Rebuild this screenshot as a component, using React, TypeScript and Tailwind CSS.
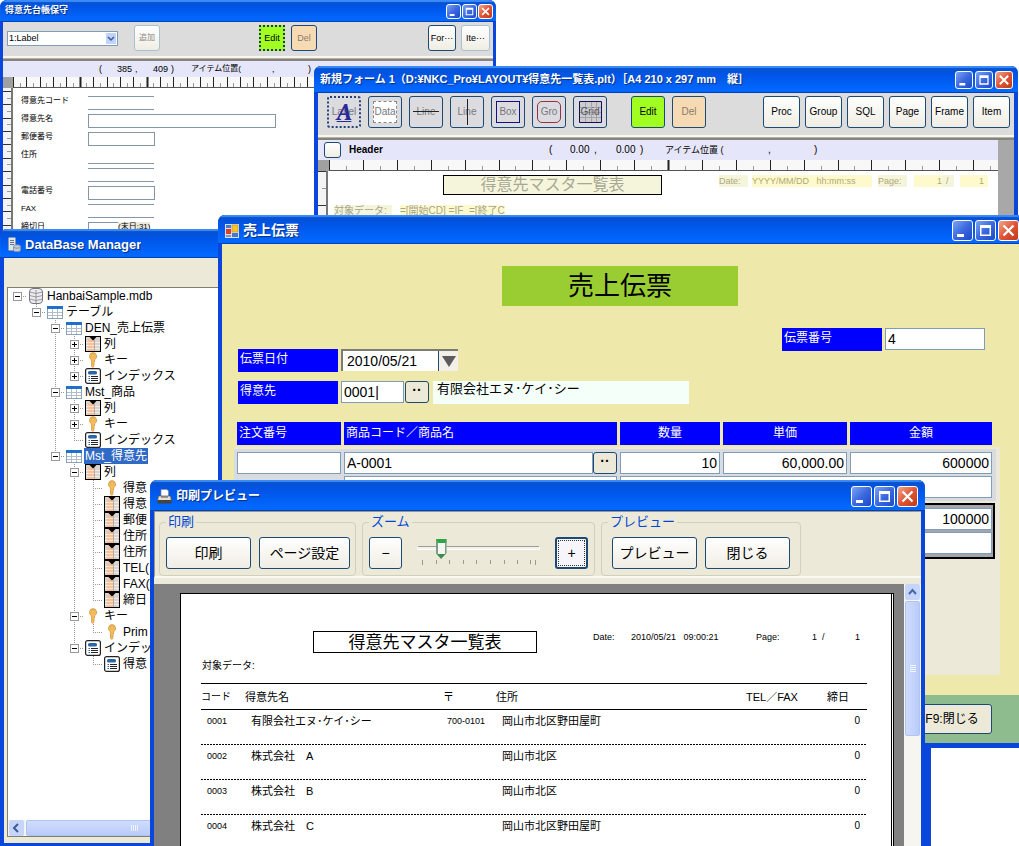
import type { ReactNode } from "react";
import clsx from "clsx";

type Size = "sm" | "md" | "lg";

const captionSize: Record<Size, string> = {
  sm: "h-[15px] w-[15px]",
  md: "h-[18px] w-[18px]",
  lg: "h-[21px] w-[21px]",
};

function CaptionButtons({ size }: { size: Size }) {
  const base = clsx(
    "rounded-[3px] border border-white bg-linear-to-br p-0",
    captionSize[size]
  );
  return (
    <div className={clsx("ml-auto flex shrink-0", size === "sm" ? "gap-px" : "gap-[2px]")}>
      <button aria-label="Minimize" className={clsx(base, "from-[#7ea3f2] via-[#3c69e0] to-[#1c49c8]")}>
        <svg viewBox="0 0 19 19" className="h-full w-full">
          <path d="M4 13h7v3H4z" fill="#fff" />
        </svg>
      </button>
      <button aria-label="Maximize" className={clsx(base, "from-[#7ea3f2] via-[#3c69e0] to-[#1c49c8]")}>
        <svg viewBox="0 0 19 19" className="h-full w-full">
          <path d="M4 4h11v11H4zM5.500 7v6.500h8V7z" fill="#fff" fillRule="evenodd" />
        </svg>
      </button>
      <button aria-label="Close" className={clsx(base, "from-[#f0a58a] via-[#df5434] to-[#c23a1a]")}>
        <svg viewBox="0 0 19 19" className="h-full w-full">
          <path d="M4.500 4.500l10 10M14.500 4.500l-10 10" stroke="#fff" strokeWidth="2.300" />
        </svg>
      </button>
    </div>
  );
}

interface WindowProps {
  title: string;
  titleClass: string;
  barClass: string;
  size?: Size;
  icon?: ReactNode;
  buttons?: boolean;
  className?: string;
  children: ReactNode;
}

function Window({ title, titleClass, barClass, size = "lg", icon, buttons = true, className, children }: WindowProps) {
  return (
    <section className={clsx("absolute flex flex-col overflow-hidden rounded-t-[7px] bg-[#0a46dc]", className)}>
      <header
        className={clsx(
          "flex shrink-0 items-center bg-linear-to-b from-[#0a50c8] from-0% via-[#0054e6] via-30% to-[#0368ff] to-90%",
          "shadow-[inset_0_2px_1px_#3c8cf8,inset_0_-1px_0_#0040b8]",
          barClass
        )}
      >
        {icon}
        <h2 className={clsx("truncate font-bold text-white [text-shadow:1px_1px_1px_#0a2f80]", titleClass)}>{title}</h2>
        {buttons && <CaptionButtons size={size} />}
      </header>
      {children}
    </section>
  );
}

const xpButton =
  "relative flex shrink-0 items-center justify-center rounded-[3px] border border-[#1c4a74] bg-linear-to-b from-white to-[#efede3] whitespace-nowrap";

/* Ticks along the top edge of the layout canvas */
function HRuler({ step, bold, className }: { step: number; bold: number[]; className?: string }) {
  const ticks = Array.from({ length: 110 }, (_, i) => i);
  return (
    <svg className={clsx("block w-full bg-[#f8f8f8]", className)} aria-hidden="true">
      {ticks.map((i) => {
        const x = Math.round(i * step) + 0.5;
        const heavy = bold.includes(i);
        return (
          <line
            key={i}
            x1={x}
            x2={x}
            y1={i % 2 === 0 || heavy ? 0 : 6}
            y2={11}
            stroke={i % 2 === 0 || heavy ? "#222" : "#999"}
            strokeWidth={heavy ? 2 : 1}
          />
        );
      })}
      <line x1="0" x2="2000" y1="10.5" y2="10.5" stroke="#555" />
    </svg>
  );
}

function VRuler({ step, offset, className }: { step: number; offset: number; className?: string }) {
  const ticks = Array.from({ length: 30 }, (_, i) => i);
  return (
    <svg className={clsx("block shrink-0 border-r-2 border-[#777] bg-[#f4f4f4]", className)} aria-hidden="true">
      {ticks.map((i) => {
        const y = Math.round(i * step + offset) + 0.5;
        return <line key={i} x1={i % 2 ? 4 : 0} x2="10" y1={y} y2={y} stroke={i % 2 ? "#999" : "#333"} />;
      })}
    </svg>
  );
}

function Splitter() {
  return <div className="h-[5px] shrink-0 border-t-2 border-b-2 border-t-[#f8f6ee] border-b-[#85837a] bg-[#b4b2a8]" />;
}

const customerFields = [
  { label: "得意先コード", box: "w-[66px] border-y" },
  { label: "得意先名", box: "w-[188px] border" },
  { label: "郵便番号", box: "w-[67px] border" },
  { label: "住所", box: "w-[66px] border-b" },
  { label: "", box: "w-[66px] border-y" },
  { label: "電話番号", box: "w-[67px] border" },
  { label: "FAX", box: "w-[66px] border-y" },
  { label: "締切日", box: "w-[30px] border-l border-t" },
];

function CustomerWindow() {
  return (
    <Window
      title="得意先台帳保守"
      titleClass="text-[9px]"
      barClass="h-[22px] pl-[5px] pr-[3px]"
      size="sm"
      className="top-0 left-0 h-[260px] w-[496px]"
    >
      <div className="mx-[3px] flex min-h-0 flex-1 flex-col bg-white">
        <div className="flex h-[34px] shrink-0 items-start bg-[#dcdcdc] pt-[3px] pr-[3px] pl-1 text-[9px] leading-none">
          <div className="relative mt-[6px]">
            <select
              aria-label="Item"
              className="h-[15px] w-[111px] appearance-none border border-[#7f9db9] bg-white pl-px text-[9px] leading-none"
            >
              <option>1:Label</option>
            </select>
            <svg viewBox="0 0 10 11" className="pointer-events-none absolute top-[2px] right-[2px] h-[11px] w-[10px]">
              <rect width="10" height="11" rx="1" fill="#c1d3fb" />
              <path d="M2 4l3 3 3-3" fill="none" stroke="#3a5a9a" strokeWidth="1.500" />
            </svg>
          </div>
          <button className={clsx(xpButton, "ml-4 h-[26px] w-[26px] border-[#a8c0d0] text-[8px] text-[#888]")}>追加</button>
          <button className="ml-[99px] h-[26px] w-[26px] shrink-0 border-2 border-dotted border-[#1c3a5a] bg-[#a0ff20]">
            Edit
          </button>
          <button className={clsx(xpButton, "ml-[6px] h-[26px] w-[26px] bg-none bg-[#f6dab4] text-[#8a7a6a]")}>Del</button>
          <button className={clsx(xpButton, "ml-auto h-[26px] w-[28px]")}>For···</button>
          <button className={clsx(xpButton, "ml-[5px] h-[26px] w-[29px] border-[#a8c0d0]")}>Ite···</button>
        </div>
        <Splitter />
        <div className="flex h-4 shrink-0 items-center bg-[#e6e6fa] pl-[96px] text-[9px] leading-none">
          <span className="w-[18px]">(</span>
          <span className="w-[18px]">385</span>
          <span className="w-[18px]">,</span>
          <span className="w-[18px]">409</span>
          <span className="w-[20px]">)</span>
          <span className="w-[81px] text-[8px]">アイテム位置(</span>
          <span className="w-[36px]">,</span>
          <span>)</span>
        </div>
        <div className="flex shrink-0">
          <span className="w-[10px] shrink-0 bg-[#a0a0a0]" />
          <HRuler step={6.68} bold={[10, 20]} className="h-[11px]" />
        </div>
        <div className="flex min-h-0 flex-1">
          <VRuler step={6.68} offset={3} className="h-full w-[10px]" />
          <div className="flex flex-col pt-[8px] pl-[8px]">
            {customerFields.map((f, i) => (
              <label key={i} className="flex h-[18px] items-start leading-[10px]">
                <span className="w-[67px] text-[8px]">{f.label}</span>
                <input className={clsx("h-[14px] border-[#8496a8] bg-transparent", f.box)} />
                {i === 7 && <span className="bg-[#ece9dc] text-[8px]">(末日:31)</span>}
              </label>
            ))}
          </div>
        </div>
      </div>
    </Window>
  );
}

const tool = clsx(xpButton, "h-8 w-[34px] bg-none bg-[#dcdce0] text-[10px] text-[#77777d]");

function FormWindow() {
  return (
    <Window
      title="新規フォーム 1（D:¥NKC_Pro¥LAYOUT¥得意先一覧表.plt）［A4 210 x 297 mm　縦］"
      titleClass="text-[11px]"
      barClass="h-[27px] pl-[6px] pr-[5px]"
      size="md"
      className="top-[66px] left-[314px] h-[170px] w-[704px]"
    >
      <div className="mx-1 flex min-h-0 flex-1 flex-col bg-white">
        <div className="flex h-[42px] shrink-0 items-start gap-[7px] bg-[#dcdcdc] pt-[3px] pr-1 pl-[9px] text-[10px] leading-none">
          <button className={clsx(tool, "border-2 border-dotted border-[#26427a]")}>
            Label
            <i className="absolute inset-0 font-serif text-[24px] leading-[28px] font-bold text-[#2a2a96] underline decoration-1">A</i>
          </button>
          <button className={tool}>
            <span className="absolute inset-1 border border-dashed border-[#888] bg-white" />
            <span className="relative">Data</span>
          </button>
          <button className={tool}>
            Line
            <span className="absolute inset-x-[3px] top-[14px] h-px bg-[#222]" />
          </button>
          <button className={tool}>
            Line
            <span className="absolute inset-y-[2px] left-[16px] w-px bg-[#222]" />
          </button>
          <button className={tool}>
            <span className="absolute inset-1 border border-[#10108a]" />
            Box
          </button>
          <button className={tool}>
            <span className="absolute inset-1 rounded-[5px] border border-[#96304a]" />
            Gro
          </button>
          <button className={tool}>
            <svg viewBox="0 0 32 30" className="absolute inset-0">
              <path d="M5.500 4.500h22v21h-22z" fill="#ccccd0" stroke="#10105a" />
              <path d="M11.500 5v20M17.500 5v20M22.500 5v20M6 10.500h21M6 15.500h21M6 20.500h21" stroke="#a4a4a8" fill="none" />
            </svg>
            <span className="relative text-[#55555c]">Grid</span>
          </button>
          <button className={clsx(xpButton, "ml-[17px] h-8 w-[34px] bg-none bg-[#a0ff20]")}>Edit</button>
          <button className={clsx(xpButton, "h-8 w-[34px] bg-none bg-[#f6dab4] text-[#8a7a6a]")}>Del</button>
          <div className="ml-auto flex gap-[5px]">
            {["Proc", "Group", "SQL", "Page", "Frame", "Item"].map((name) => (
              <button key={name} className={clsx(xpButton, "h-8 w-[37px]")}>
                {name}
              </button>
            ))}
          </div>
        </div>
        <Splitter />
        <div className="flex min-h-0 flex-1">
          <div className="flex min-w-0 flex-1 flex-col">
            <div className="flex h-5 shrink-0 items-center bg-[#e6e6fa] pl-[6px] text-[10px] leading-none">
              <button aria-label="Header section" className={clsx(xpButton, "h-4 w-[17px]")} />
              <b className="w-[208px] pl-2">Header</b>
              <span className="w-[21px]">(</span>
              <span className="w-[24px]">0.00</span>
              <span className="w-[22px]">,</span>
              <span className="w-[24px]">0.00</span>
              <span className="w-[25px]">)</span>
              <span className="w-[103px] text-[9px]">アイテム位置 (</span>
              <span className="w-[46px]">,</span>
              <span>)</span>
            </div>
            <div className="flex shrink-0">
              <span className="w-[11px] shrink-0 bg-[#a0a0a0]" />
              <HRuler step={16.95} bold={[20]} className="h-[11px]" />
            </div>
            <div className="flex min-h-0 flex-1">
              <VRuler step={17} offset={0} className="h-full w-[10px]" />
              <div className="flex min-w-0 flex-1 flex-col pt-[4px] pr-[10px] pl-[6px] text-[9px] leading-[12px] text-[#a5a58a]">
                <div className="flex items-start">
                  <div className="ml-[109px] h-5 w-[219px] border border-black bg-[#f5f5dc] text-center text-[16px] leading-[18px] text-[#a8a894]">
                    得意先マスタ一覧表
                  </div>
                  <div className="ml-auto flex text-[#b0a878]">
                    <span className="w-[29px] bg-[#f5f5dc]">Date:</span>
                    <span className="ml-1 w-[120px] bg-[#fffacd] whitespace-pre">YYYY/MM/DD   hh:mm:ss</span>
                    <span className="ml-[6px] w-[29px] bg-[#f5f5dc]">Page:</span>
                    <span className="ml-[7px] w-[28px] bg-[#fffacd] text-right">1</span>
                    <span className="w-3 bg-[#f5f5dc] pl-1">/</span>
                    <span className="ml-[6px] w-[28px] bg-[#fffacd] pr-1 text-right">1</span>
                  </div>
                </div>
                <div className="mt-[10px] flex text-[10px]">
                  <span className="w-[58px] bg-[#f5f5dc]">対象データ:</span>
                  <span className="ml-[8px] bg-[#fffacd] whitespace-pre">=[開始CD] =IF  =[終了C</span>
                </div>
              </div>
            </div>
          </div>
          <div className="w-4 shrink-0 bg-[#a8a8a8]" />
        </div>
      </div>
    </Window>
  );
}

type IconKind = "db" | "table" | "column" | "key" | "index";

function TreeIcon({ kind }: { kind: IconKind }) {
  return (
    <svg viewBox="0 0 16 16" className="ml-px h-4 w-4 shrink-0" aria-hidden="true">
      {kind === "db" && (
        <g fill="#ececf0" stroke="#77777c">
          <rect x="1.500" y="0.500" width="13" height="15" rx="3.500" />
          <path d="M1.500 4q6.500 3 13 0M1.500 7.500q6.500 3 13 0M1.500 11q6.500 3 13 0M8 2v13" fill="none" strokeWidth=".7" />
        </g>
      )}
      {kind === "table" && (
        <g>
          <rect x="0.500" y="2.500" width="15" height="12" fill="#fff" stroke="#8ca0b8" />
          <rect y="2" width="16" height="3" fill="#1d70cc" />
          <path d="M5.500 5v9M10.500 5v9M1 8.500h14M1 11.500h14" stroke="#b4bec8" />
        </g>
      )}
      {kind === "column" && (
        <g>
          <rect x="0.500" y="0.500" width="15" height="15" fill="#d9d4cf" stroke="#000" />
          <rect x="3" y="3" width="6" height="12" fill="#f5c09a" />
          <path d="M1 6.500h14M1 9.500h14M1 12.500h14" stroke="#fff" strokeOpacity=".55" />
          <path d="M9.500 3v12" stroke="#b8aca0" />
          <path d="M4.500 1h7L8 4.500z" fill="#000" />
        </g>
      )}
      {kind === "key" && (
        <g fill="#f8bd58" stroke="#c88c30" strokeWidth=".7">
          <path d="M8 .6a3.800 3.800 0 0 1 1.500 7.200v2.200l-1 1 1 1.200-1 1 .5 1-1.200 1.300-1.200-1.200V7.800A3.800 3.800 0 0 1 8 .6z" />
          <circle cx="8" cy="3.200" r="1.100" fill="#fff" />
        </g>
      )}
      {kind === "index" && (
        <g>
          <rect x="0.600" y="0.600" width="14.800" height="14.800" rx="2" fill="#fff" stroke="#222" strokeWidth="1.200" />
          <rect x="3" y="3" width="9" height="3.500" rx="1.500" fill="#2c64a8" />
          <path d="M6 8.500h7M6 10.500h7M6 12.500h7" stroke="#222" />
          <path d="M3.500 8.500h1.500M3.500 10.500h1.500M3.500 12.500h1.500" stroke="#2c64a8" />
        </g>
      )}
    </svg>
  );
}

/*
 * One guide cell per level:
 * "." blank, "|" line through, "t"/"l" branch and last branch,
 * "+"/"-" expander on a branch, "p"/"m" expander on the last branch, "r" root.
 */
function Guide({ kind }: { kind: string }) {
  const through = "|t+-".includes(kind);
  const upper = "lpm".includes(kind);
  const open = "-mr".includes(kind);
  const art = (
    <svg viewBox="0 0 19 16" className="h-4 w-[19px]">
      {(through || upper) && (
        <path d={through ? "M9.500 0v16" : "M9.500 0v8"} stroke="#999" strokeDasharray="1 1" />
      )}
      {kind !== "." && kind !== "|" && <path d="M9 8.500h10" stroke="#999" strokeDasharray="1 1" />}
      {"+-pmr".includes(kind) && (
        <>
          <rect x="5.500" y="4.500" width="8" height="8" fill="#fff" stroke="#999" />
          <path d={open ? "M7 8.500h5" : "M7 8.500h5M9.500 6v5"} stroke="#000" />
        </>
      )}
    </svg>
  );
  if ("+-pmr".includes(kind)) {
    return (
      <button aria-label={open ? "Collapse" : "Expand"} className="shrink-0">
        {art}
      </button>
    );
  }
  return <span className="shrink-0">{art}</span>;
}

const tree: { guides: string; icon: IconKind; text: string; selected?: boolean }[] = [
  { guides: "r", icon: "db", text: "HanbaiSample.mdb" },
  { guides: ".m", icon: "table", text: "テーブル" },
  { guides: "..-", icon: "table", text: "DEN_売上伝票" },
  { guides: "..|+", icon: "column", text: "列" },
  { guides: "..|+", icon: "key", text: "キー" },
  { guides: "..|p", icon: "index", text: "インデックス" },
  { guides: "..-", icon: "table", text: "Mst_商品" },
  { guides: "..|+", icon: "column", text: "列" },
  { guides: "..|+", icon: "key", text: "キー" },
  { guides: "..|l", icon: "index", text: "インデックス" },
  { guides: "..m", icon: "table", text: "Mst_得意先", selected: true },
  { guides: "...-", icon: "column", text: "列" },
  { guides: "...|t", icon: "key", text: "得意" },
  { guides: "...|t", icon: "column", text: "得意" },
  { guides: "...|t", icon: "column", text: "郵便" },
  { guides: "...|t", icon: "column", text: "住所" },
  { guides: "...|t", icon: "column", text: "住所" },
  { guides: "...|t", icon: "column", text: "TEL(" },
  { guides: "...|t", icon: "column", text: "FAX(" },
  { guides: "...|l", icon: "column", text: "締日" },
  { guides: "...-", icon: "key", text: "キー" },
  { guides: "...|l", icon: "key", text: "Prim" },
  { guides: "...m", icon: "index", text: "インデックス" },
  { guides: "....l", icon: "index", text: "得意" },
];

function DatabaseWindow() {
  return (
    <Window
      title="DataBase Manager"
      titleClass="text-[13px]"
      barClass="h-[29px] pl-2 pt-[2px]"
      buttons={false}
      className="top-[229px] bottom-0 left-0 w-[931px]"
      icon={
        <svg viewBox="0 0 13 15" className="mr-1 h-[15px] w-[13px]">
          <rect x="0.500" y="0.500" width="7" height="13" rx="1" fill="#dce4ec" stroke="#8a9aac" />
          <path d="M2 3.500h4M2 5.500h4M2 7.500h4" stroke="#6a7a90" />
          <rect x="5.500" y="8" width="7" height="6.500" rx="2" fill="#c4ccd8" stroke="#8a9aac" />
          <path d="M5.500 10.500q3.500 1.500 7 0" fill="none" stroke="#8a9aac" />
        </svg>
      }
    >
      <div className="mr-[6px] mb-[3px] ml-1 flex min-h-0 flex-1 flex-col bg-[#ece9d8] pt-[29px] pb-[6px] pl-[3px]">
        <div className="flex min-h-0 flex-1 flex-col border border-[#808070] bg-white">
          <ul className="min-h-0 flex-1 overflow-hidden text-[12px] leading-4">
            {tree.map((node, i) => (
              <li key={i} className="flex h-4 items-center">
                {node.guides.split("").map((g, j) => (
                  <Guide key={j} kind={g} />
                ))}
                <TreeIcon kind={node.icon} />
                <span className={clsx("ml-[2px] px-px whitespace-nowrap", node.selected && "bg-[#316ac5] text-white")}>
                  {node.text}
                </span>
              </li>
            ))}
          </ul>
          <div className="flex h-4 shrink-0 gap-[2px] bg-[#f4f3ee] px-px">
            <button aria-label="Scroll left" className="h-4 w-[15px] rounded-[2px] bg-[#c6d5fc]">
              <svg viewBox="0 0 15 16" className="h-full w-full">
                <path d="M9 4L5 8l4 4" fill="none" stroke="#3f5a94" strokeWidth="2" />
              </svg>
            </button>
            <div className="flex h-4 w-[217px] items-center justify-center rounded-[2px] border border-[#b0c4f4] bg-linear-to-b from-[#cfdcfd] to-[#bacbf8]">
              <svg viewBox="0 0 8 6" className="h-[6px] w-2">
                <path d="M.5 0v6M2.500 0v6M4.500 0v6M6.500 0v6" stroke="#eef4ff" />
              </svg>
            </div>
          </div>
        </div>
      </div>
    </Window>
  );
}

const slipInput = "h-[22px] w-full border border-[#7f9db9] bg-white px-[2px] text-[14px] leading-none";
const slipLabel = "h-[23px] w-[100px] shrink-0 bg-[#0000ff] pl-[2px] text-[12px] leading-[21px] text-white";

function SlipColumns() {
  return (
    <colgroup>
      <col className="w-[107px]" />
      <col className="w-[276px]" />
      <col className="w-[103px]" />
      <col className="w-[127px]" />
      <col className="w-[142px]" />
    </colgroup>
  );
}

function SlipLine({ code, qty, price, amount }: { code: string; qty: string; price: string; amount: string }) {
  return (
    <table className="w-[755px] table-fixed border-collapse">
      <SlipColumns />
      <tbody>
        <tr className="h-6">
          <td className="p-0 pr-[3px] align-top">
            <input aria-label="注文番号" className={clsx(slipInput, "block")} />
          </td>
          <td className="p-0 pr-[3px] align-top">
            <div className="flex">
              <input aria-label="商品コード" className={slipInput} defaultValue={code} />
              <button aria-label="商品検索" className={clsx(xpButton, "h-[22px] w-6 bg-none bg-[#ece9d8] pb-1 text-[14px] leading-none font-bold")}>
                ··
              </button>
            </div>
          </td>
          <td className="p-0 pr-[3px] align-top">
            <input aria-label="数量" className={clsx(slipInput, "block text-right")} defaultValue={qty} />
          </td>
          <td className="p-0 pr-[3px] align-top">
            <input aria-label="単価" className={clsx(slipInput, "block text-right")} defaultValue={price} />
          </td>
          <td className="p-0 align-top">
            <input aria-label="金額" className={clsx(slipInput, "block text-right")} defaultValue={amount} />
          </td>
        </tr>
        <tr>
          <td />
          <td className="p-0 pr-[3px] align-top">
            <input aria-label="商品名" className={clsx(slipInput, "block")} />
          </td>
          <td colSpan={3} className="p-0 align-top">
            <input aria-label="備考" className={clsx(slipInput, "block")} />
          </td>
        </tr>
      </tbody>
    </table>
  );
}

function SlipWindow() {
  return (
    <Window
      title="売上伝票"
      titleClass="text-[14px]"
      barClass="h-[29px] pl-[7px] pr-1 pt-[2px]"
      className="top-[215px] -right-1 left-[218px] h-[533px]"
      icon={
        <svg viewBox="0 0 14 14" className="mr-1 h-[14px] w-[14px]">
          <rect width="14" height="14" fill="#d8e0ec" />
          <rect x="1" y="1" width="5" height="3" fill="#4a78c8" />
          <rect x="7" y="1" width="6" height="7" fill="#f4c430" stroke="#c89010" strokeWidth=".6" />
          <rect x="1" y="5" width="5" height="5" fill="#d8402c" />
          <rect x="1" y="11" width="5" height="2" fill="#8098c0" />
          <rect x="7" y="9" width="6" height="4" fill="#4a78c8" />
        </svg>
      }
    >
      <div className="mx-1 mb-[5px] flex min-h-0 flex-1 flex-col bg-[#eee8aa]">
        <h1 className="mt-[22px] ml-[280px] h-10 w-[236px] bg-[#9acd32] text-center text-[26px] leading-10">売上伝票</h1>
        <div className="mt-[22px] mr-[34px] ml-4 flex items-start">
          <div className="flex flex-col gap-[9px] pt-[21px]">
            <div className="flex items-start gap-[3px]">
              <label htmlFor="slip-date" className={slipLabel}>
                伝票日付
              </label>
              <div className="flex h-[22px] w-[117px] border-t-2 border-l-2 border-[#7c7c74] bg-white">
                <input id="slip-date" className="min-w-0 flex-1 pl-1 text-[14px] leading-none" defaultValue="2010/05/21" />
                <button aria-label="日付選択" className="flex w-5 items-center justify-center border-l border-[#1c4a74] bg-[#f2f0e8]">
                  <svg viewBox="0 0 14 11" className="h-[11px] w-[14px]">
                    <path d="M0 0h14L7 11z" fill="#5c5c5c" />
                  </svg>
                </button>
              </div>
            </div>
            <div className="flex items-start">
              <label htmlFor="slip-customer" className={slipLabel}>
                得意先
              </label>
              <div className="ml-[3px] w-[63px]">
                <input id="slip-customer" className={clsx(slipInput, "block")} defaultValue="0001|" />
              </div>
              <button aria-label="得意先検索" className={clsx(xpButton, "ml-px h-[22px] w-6 bg-none bg-[#ece9d8] pb-1 text-[14px] leading-none font-bold")}>
                ··
              </button>
              <span className="ml-1 h-[23px] w-[256px] bg-[#f5fffa] pl-1 text-[13px] leading-4">有限会社エヌ･ケイ･シー</span>
            </div>
          </div>
          <div className="ml-auto flex items-start gap-[3px]">
            <label htmlFor="slip-no" className={slipLabel}>
              伝票番号
            </label>
            <div className="w-[100px]">
              <input id="slip-no" className={clsx(slipInput, "block")} defaultValue="4" />
            </div>
          </div>
        </div>

        <table className="mt-[18px] ml-[15px] w-[755px] table-fixed border-collapse text-[12px] leading-[23px] text-white">
          <SlipColumns />
          <thead>
            <tr>
              {["注文番号", "商品コード／商品名", "数量", "単価", "金額"].map((name, i) => (
                <th key={name} className={clsx("p-0 font-normal", i < 4 && "pr-[3px]", i < 2 && "text-left")}>
                  <div className="bg-[#0000ff] px-[2px]">{name}</div>
                </th>
              ))}
            </tr>
          </thead>
        </table>

        <div className="mt-[2px] mr-[19px] ml-3 h-[228px] bg-[#ece9d8] pt-[2px] pr-1">
          <div className="bg-[#d8dce0] py-[3px] pl-[3px]">
            <SlipLine code="A-0001" qty="10" price="60,000.00" amount="600000" />
          </div>
          <div className="mt-[2px] mr-px border-2 border-black bg-[#a4a6ac] py-[3px] pl-px">
            <SlipLine code="" qty="" price="" amount="100000" />
          </div>
        </div>
        <div className="mt-auto flex h-12 items-center justify-end bg-[#8fbc8f] pr-[27px]">
          <button className={clsx(xpButton, "h-[30px] w-20 bg-none bg-[#ece9d8] text-[12px]")}>F9:閉じる</button>
        </div>
      </div>
    </Window>
  );
}

const reportRows = [
  { code: "0001", name: "有限会社エヌ･ケイ･シー", zip: "700-0101", address: "岡山市北区野田屋町" },
  { code: "0002", name: "株式会社　A", zip: "", address: "岡山市北区" },
  { code: "0003", name: "株式会社　B", zip: "", address: "岡山市北区" },
  { code: "0004", name: "株式会社　C", zip: "", address: "岡山市北区野田屋町" },
];

function ReportPage() {
  return (
    <div className="ml-[26px] flex min-w-0 flex-1 flex-col border-t border-r-[3px] border-l border-double border-black bg-white pr-6 pl-5 text-[9px] leading-3">
      <div className="mt-[37px] flex items-start">
        <h3 className="ml-[112px] h-[22px] w-[224px] shrink-0 border border-black text-center text-[17px] leading-[22px]">
          得意先マスタ一覧表
        </h3>
        <div className="ml-[56px] flex whitespace-pre">
          <span className="w-[38px]">Date:</span>
          <span className="w-[125px]">2010/05/21   09:00:21</span>
          <span className="w-[56px]">Page:</span>
          <span className="w-[43px]">1  /</span>
          <span>1</span>
        </div>
      </div>
      <p className="h-[30px] pt-[6px] pl-px text-[10px] leading-[14px]">対象データ:</p>
      <table className="w-full table-fixed border-collapse text-[11px] leading-[14px]">
        <colgroup>
          <col className="w-[44px]" />
          <col className="w-[198px]" />
          <col className="w-[53px]" />
          <col />
          <col className="w-[81px]" />
          <col className="w-[40px]" />
        </colgroup>
        <thead>
          <tr className="h-[26px] border-y border-black text-left">
            <th className="p-0 text-[10px] font-normal">コード</th>
            <th className="p-0 font-normal">得意先名</th>
            <th className="p-0 font-normal">〒</th>
            <th className="p-0 font-normal">住所</th>
            <th className="p-0 font-normal">TEL／FAX</th>
            <th className="p-0 font-normal">締日</th>
          </tr>
        </thead>
        <tbody>
          {reportRows.map((row) => (
            <tr
              key={row.code}
              className="h-[35px] bg-[repeating-linear-gradient(to_right,#000_0_2px,transparent_2px_3px)] bg-[length:100%_1px] bg-bottom bg-no-repeat align-top"
            >
              <td className="p-0 pt-1 pl-[6px] text-[9px]">{row.code}</td>
              <td className="p-0 pt-1 pl-[6px]">{row.name}</td>
              <td className="p-0 pt-1 pl-1 text-[9px]">{row.zip}</td>
              <td className="p-0 pt-1 pl-[6px]">{row.address}</td>
              <td className="p-0" />
              <td className="p-0 pt-1 pr-[7px] text-right text-[10px]">0</td>
            </tr>
          ))}
        </tbody>
      </table>
    </div>
  );
}

const group = "h-[61px] rounded-[4px] border border-[#d0d0bf] pt-[8px] pb-[6px]";
const legend = "px-[2px] text-[13px] leading-[14px] text-[#0046d5]";
const previewButton = clsx(xpButton, "h-8 text-[14px]");

function PreviewWindow() {
  return (
    <Window
      title="印刷プレビュー"
      titleClass="text-[12px]"
      barClass="h-[31px] pl-[7px] pr-[7px] pt-px"
      className="top-[480px] -bottom-1 left-[150px] w-[775px]"
      icon={
        <svg viewBox="0 0 15 15" className="mr-1 h-[15px] w-[15px]">
          <path d="M4 .5h6l1.500 1.500V8H4z" fill="#fff" stroke="#888" strokeWidth=".7" />
          <path d="M1.500 7h12l1 5h-14z" fill="#e4e0d4" stroke="#555" strokeWidth=".7" />
          <path d="M.5 11h14v3.500H.5z" fill="#444" />
          <path d="M4 8h7" stroke="#555" />
        </svg>
      }
    >
      <div className="mx-1 flex min-h-0 flex-1 flex-col bg-[#ece9d8]">
        <div className="flex h-[67px] shrink-0 items-start gap-[6px] border-t border-l border-[#9a9888] border-b-2 border-b-[#fbfaf2] pt-[3px] pl-1">
          <fieldset className={clsx(group, "pr-[5px] pl-[6px]")}>
            <legend className={legend}>印刷</legend>
            <div className="flex gap-2">
              <button className={clsx(previewButton, "w-[85px]")}>印刷</button>
              <button className={clsx(previewButton, "w-[91px]")}>ページ設定</button>
            </div>
          </fieldset>
          <fieldset className={clsx(group, "pr-[6px] pl-[6px]")}>
            <legend className={legend}>ズーム</legend>
            <div className="flex">
              <button className={clsx(previewButton, "w-[33px]")}>−</button>
              <div className="mx-[15px] w-[123px]">
                <input
                  type="range"
                  aria-label="ズーム"
                  min={0}
                  max={100}
                  defaultValue={16}
                  className="block h-[22px] w-full appearance-none bg-transparent [&::-webkit-slider-runnable-track]:h-[4px] [&::-webkit-slider-runnable-track]:rounded [&::-webkit-slider-runnable-track]:border [&::-webkit-slider-runnable-track]:border-white [&::-webkit-slider-runnable-track]:border-t-[#9d9c99] [&::-webkit-slider-runnable-track]:bg-[#f3f2ea] [&::-webkit-slider-thumb]:mt-[-8px] [&::-webkit-slider-thumb]:h-5 [&::-webkit-slider-thumb]:w-[11px] [&::-webkit-slider-thumb]:appearance-none [&::-webkit-slider-thumb]:border-2 [&::-webkit-slider-thumb]:border-t-[4px] [&::-webkit-slider-thumb]:border-b-[5px] [&::-webkit-slider-thumb]:border-[#7c9c84] [&::-webkit-slider-thumb]:border-t-[#2aa84a] [&::-webkit-slider-thumb]:border-b-[#3f8a55] [&::-webkit-slider-thumb]:bg-[#f4f6f2] [&::-webkit-slider-thumb]:[clip-path:polygon(0_0,100%_0,100%_70%,50%_100%,0_70%)]"
                />
                <svg viewBox="0 0 123 5" className="mt-px h-[5px] w-full">
                  <path
                    d="M5.500 0v5M19.500 0v4M32.500 0v4M46.500 0v4M59.500 0v4M73.500 0v4M87.500 0v4M100.500 0v4M113.500 0v4M118.500 0v5"
                    stroke="#9c9a8c"
                  />
                </svg>
              </div>
              <button className={clsx(previewButton, "w-[33px] border-2 bg-none bg-[#f6f6fa] outline-1 -outline-offset-4 outline-dotted outline-[#333]")}>
                +
              </button>
            </div>
          </fieldset>
          <fieldset className={clsx(group, "pr-[10px] pl-[10px]")}>
            <legend className={clsx(legend, "-ml-1")}>プレビュー</legend>
            <div className="flex gap-2">
              <button className={clsx(previewButton, "w-[85px]")}>プレビュー</button>
              <button className={clsx(previewButton, "w-[85px]")}>閉じる</button>
            </div>
          </fieldset>
        </div>
        <div className="mt-[6px] flex min-h-0 flex-1 bg-[#808080]">
          <div className="flex min-w-0 flex-1 pt-[9px]">
            <ReportPage />
          </div>
          <div className="ml-[10px] flex w-[17px] shrink-0 flex-col gap-px bg-[#f6f5f0] px-px">
            <button aria-label="Scroll up" className="h-4 rounded-[2px] bg-[#c6d5fc]">
              <svg viewBox="0 0 15 16" className="h-full w-full">
                <path d="M4 10l3.500-4 3.500 4" fill="none" stroke="#4a68a8" strokeWidth="2" />
              </svg>
            </button>
            <div className="flex h-[135px] items-center justify-center rounded-[2px] border border-[#b0c4f4] bg-linear-to-r from-[#cfdcfd] to-[#bacbf8]">
              <svg viewBox="0 0 6 8" className="h-2 w-[6px]">
                <path d="M0 .5h6M0 2.500h6M0 4.500h6M0 6.500h6" stroke="#f2f6ff" />
              </svg>
            </div>
          </div>
        </div>
      </div>
    </Window>
  );
}

export default function App() {
  return (
    <main className="relative h-screen w-full overflow-hidden bg-white font-['Liberation_Sans','Noto_Sans_CJK_JP',sans-serif] text-black">
      <CustomerWindow />
      <FormWindow />
      <DatabaseWindow />
      <SlipWindow />
      <PreviewWindow />
    </main>
  );
}
